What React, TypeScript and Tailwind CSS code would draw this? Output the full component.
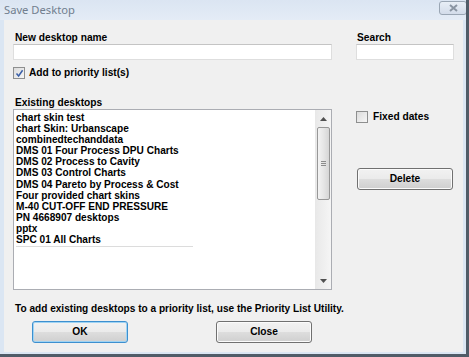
import React from "react";

const items = [
  "chart skin test",
  "chart Skin: Urbanscape",
  "combinedtechanddata",
  "DMS 01 Four Process DPU Charts",
  "DMS 02 Process to Cavity",
  "DMS 03 Control Charts",
  "DMS 04 Pareto by Process & Cost",
  "Four provided chart skins",
  "M-40 CUT-OFF END PRESSURE",
  "PN 4668907 desktops",
  "pptx",
  "SPC 01 All Charts",
];

function CheckBox({ checked }: { checked: boolean }) {
  return (
    <div className="w-[12px] h-[12px] border border-[#8e8f8f] bg-gradient-to-br from-[#dcdcdc] to-[#f6f6f6] flex items-center justify-center">
      {checked && (
        <svg width="9" height="9" viewBox="0 0 9 9">
          <path d="M1.5 4.5 L3.6 7 L7.6 1.2" stroke="#3a5fa8" strokeWidth="1.5" fill="none" />
        </svg>
      )}
    </div>
  );
}

function Button({ label, focused }: { label: string; focused?: boolean }) {
  return (
    <div
      className={
        "w-[96px] h-[22px] rounded-[3px] border flex items-center justify-center bg-[linear-gradient(#f2f2f2_0%,#ebebeb_48%,#dddddd_52%,#cfcfcf_100%)] " +
        (focused ? "border-[#3c8fcf] shadow-[inset_0_0_0_1px_#9fd3f3]" : "border-[#707070] shadow-[inset_0_0_0_1px_#fbfbfb]")
      }
    >
      <span className="text-[10.2px] font-bold text-black leading-none">{label}</span>
    </div>
  );
}

export default function App() {
  return (
    <div
      className="w-[469px] h-[357px] flex flex-col bg-[#dbe6f3] border-r-[3px] border-b-[3px] border-[#505c68] overflow-hidden"
      style={{ fontFamily: '"Liberation Sans", Arial, sans-serif' }}
    >
      {/* title bar */}
      <div className="h-[20px] flex items-center pl-[4px] pr-[0px] bg-gradient-to-b from-[#dbe5f2] to-[#e4ecf6] shrink-0">
        <span className="text-[11.2px] text-[#717e8e] leading-none" style={{ fontFamily: '"Noto Sans", sans-serif' }}>
          Save Desktop
        </span>
        <div className="ml-auto mt-[-4px] mr-[-1px] w-[28px] h-[14px] rounded-[3px] border border-[#9aa6b4] bg-gradient-to-b from-[#e8eef6] to-[#d3dcea] flex items-center justify-center">
          <svg width="9" height="8" viewBox="0 0 9 8">
            <path d="M1 1 L8 7 M8 1 L1 7" stroke="#8a95a3" strokeWidth="2" />
          </svg>
        </div>
      </div>

      {/* client area */}
      <div className="flex-1 ml-[4px] mb-[2px] w-[459px] bg-[#f0f0f0] flex flex-col pt-[11px]">
        <div className="flex">
          {/* left column */}
          <div className="ml-[9px] w-[319px] flex flex-col">
            <div className="pl-[2px] h-[13px] text-[10.2px] font-bold leading-[13px] text-black">New desktop name</div>
            <div className="h-[16px] bg-white border border-[#dedede] border-t-[#c4c4c4]" />
            <div className="flex items-center mt-[7px] h-[12px]">
              <CheckBox checked />
              <span className="ml-[4px] text-[10.2px] font-bold text-black leading-none">Add to priority list(s)</span>
            </div>
            <div className="mt-[17px] pl-[2px] h-[13px] text-[10.2px] font-bold leading-[13px] text-black">Existing desktops</div>
            <div className="mt-[0px] h-[181px] bg-white border border-[#abadb3] flex">
              <div className="flex-1 pl-[2px] pt-[2px]">
                {items.map((t, i) => (
                  <div
                    key={t}
                    className={
                      "text-[10.1px] font-bold text-black leading-[11.1px] whitespace-nowrap " +
                      (i === items.length - 1 ? "w-[177px] border-b border-[#dcdcdc] pb-[1px]" : "")
                    }
                  >
                    {t}
                  </div>
                ))}
              </div>
              {/* scrollbar */}
              <div className="w-[16px] border-l border-[#e8e8e8] bg-gradient-to-r from-[#e9e9e9] to-[#f5f5f5] flex flex-col items-center">
                <div className="h-[17px] flex items-center justify-center">
                  <svg width="7" height="4" viewBox="0 0 7 4">
                    <path d="M0 4 L3.5 0 L7 4 Z" fill="#505050" />
                  </svg>
                </div>
                <div className="w-[13px] h-[73px] rounded-[2px] border border-[#979797] bg-gradient-to-r from-[#f3f3f3] via-[#e6e6e6] to-[#d6d6d6] flex flex-col items-center justify-center gap-[1px]">
                  <div className="w-[5px] h-[1px] bg-[#8c8c8c]" />
                  <div className="w-[5px] h-[1px] bg-[#8c8c8c]" />
                  <div className="w-[5px] h-[1px] bg-[#8c8c8c]" />
                </div>
                <div className="flex-1" />
                <div className="h-[17px] flex items-center justify-center">
                  <svg width="7" height="4" viewBox="0 0 7 4">
                    <path d="M0 0 L7 0 L3.5 4 Z" fill="#505050" />
                  </svg>
                </div>
              </div>
            </div>
          </div>

          {/* right column */}
          <div className="ml-[24px] w-[98px] flex flex-col">
            <div className="pl-[1px] h-[13px] text-[10.2px] font-bold leading-[13px] text-black">Search</div>
            <div className="h-[16px] bg-white border border-[#dedede] border-t-[#c4c4c4]" />
            <div className="flex items-center mt-[51px] h-[12px]">
              <CheckBox checked={false} />
              <span className="ml-[5px] text-[10.2px] font-bold text-black leading-none">Fixed dates</span>
            </div>
            <div className="mt-[45px] ml-[1px]">
              <Button label="Delete" />
            </div>
          </div>
        </div>

        <div className="ml-[11px] mt-[12px] text-[10.1px] font-bold text-black leading-[13px] whitespace-nowrap">
          To add existing desktops to a priority list, use the Priority List Utility.
        </div>
        <div className="flex mt-[6px] ml-[28px] gap-[88px]">
          <Button label="OK" focused />
          <Button label="Close" />
        </div>
      </div>
    </div>
  );
}
